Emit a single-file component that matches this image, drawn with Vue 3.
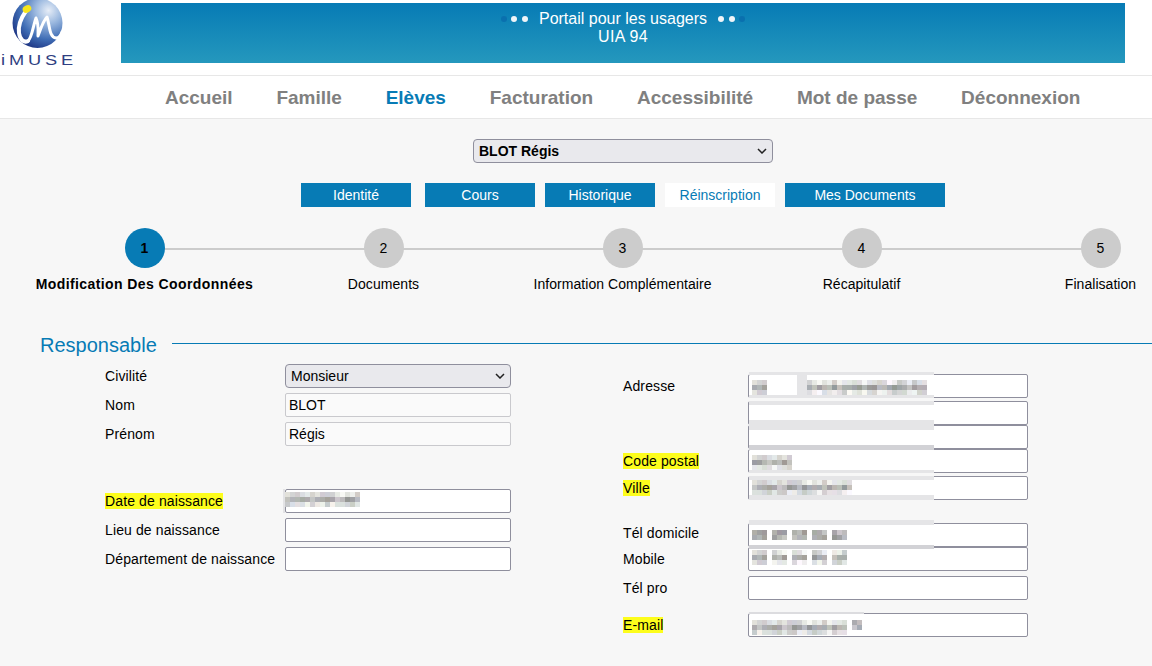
<script setup>
const navItems = ['Accueil', 'Famille', 'Elèves', 'Facturation', 'Accessibilité', 'Mot de passe', 'Déconnexion']
const tabs = [
  { label: 'Identité', cls: 'wide first' },
  { label: 'Cours', cls: 'wide' },
  { label: 'Historique', cls: 'wide' },
  { label: 'Réinscription', cls: 'wide on' },
  { label: 'Mes Documents', cls: 'long' }
]
const steps = ['Modification Des Coordonnées', 'Documents', 'Information Complémentaire', 'Récapitulatif', 'Finalisation']

function cells(blocks) {
  const out = []
  let seed = 7
  const rnd = () => {
    seed = (seed * 9301 + 49297) % 233280
    return seed / 233280
  }
  for (const b of blocks) {
    for (let row = 0; row < b.h; row += 5) {
      for (let col = 0; col < b.w; col += 5) {
        const dark = b.h <= 10 || row === 5
        const v = Math.round(dark ? 150 + rnd() * 50 : 200 + rnd() * 50)
        const r = Math.round(v + (rnd() - 0.5) * 14)
        const bl = Math.round(v + (rnd() - 0.5) * 18)
        out.push({ left: b.x + col + 'px', top: b.y + row + 'px', background: `rgb(${r},${v},${bl})` })
      }
    }
  }
  return out
}

const strips = (list) => list.map(s => ({
  left: s[0] + 'px', top: s[1] + 'px', width: s[2] + 'px', height: s[3] + 'px', background: s[4] || '#e5e5e7'
}))

const left = [
  { label: 'Civilité', select: 'Monsieur', mt: 0 },
  { label: 'Nom', value: 'BLOT', soft: true, mt: 5 },
  { label: 'Prénom', value: 'Régis', soft: true, mt: 5 },
  { label: 'Date de naissance', mark: true, mt: 43, blur: cells([{ x: 0, y: 3, w: 75, h: 15 }]), strips: strips([[-2, 0, 2, 24, '#e3e3e5']]) },
  { label: 'Lieu de naissance', mt: 5 },
  { label: 'Département de naissance', mt: 5 }
]
const right = [
  { label: 'Adresse', mt: 0, blur: cells([{ x: 4, y: 6, w: 15, h: 15 }, { x: 59, y: 6, w: 120, h: 15 }]),
    strips: strips([[1, -2, 185, 3], [49, -2, 10, 26], [1, 21, 185, 3]]) },
  { label: '', mt: 3, strips: strips([[1, 0, 185, 4], [1, 19, 185, 5]]) },
  { label: '', mt: 0, strips: strips([[1, 0, 185, 5], [1, 20, 185, 4, '#d2d2d6']]) },
  { label: 'Code postal', mark: true, mt: 0, blur: cells([{ x: 4, y: 6, w: 40, h: 15 }]), strips: strips([[1, 0, 185, 1, '#d2d2d6'], [1, 21, 185, 3]]) },
  { label: 'Ville', mark: true, mt: 3, blur: cells([{ x: 4, y: 4, w: 100, h: 15 }]), strips: strips([[1, 0, 185, 4], [1, 19, 185, 5]]) },
  { label: 'Tél domicile', mt: 23, dy: -2, blur: cells([{ x: 4, y: 7, w: 15, h: 10 }, { x: 24, y: 7, w: 15, h: 10 }, { x: 44, y: 7, w: 15, h: 10 }, { x: 64, y: 7, w: 15, h: 10 }, { x: 84, y: 7, w: 15, h: 10 }]), strips: strips([[1, -3, 185, 5]]) },
  { label: 'Mobile', mt: 0, blur: cells([{ x: 4, y: 3, w: 15, h: 15 }, { x: 24, y: 3, w: 15, h: 15 }, { x: 44, y: 3, w: 15, h: 15 }, { x: 64, y: 3, w: 15, h: 15 }, { x: 84, y: 3, w: 15, h: 15 }]), strips: strips([[1, -2, 185, 4, '#d2d2d6']]) },
  { label: 'Tél pro', mt: 5 },
  { label: 'E-mail', mark: true, mt: 13, blur: cells([{ x: 4, y: 7, w: 95, h: 15 }, { x: 104, y: 7, w: 10, h: 10 }]), strips: strips([[1, -1, 115, 2, '#dcdcdf']]) }
]
</script>

<template>
  <div class="page">
    <header class="top">
      <div class="logo">
        <svg class="mark" width="52" height="52" viewBox="0 0 52 52" aria-hidden="true">
          <defs>
            <radialGradient id="sph" cx="0.72" cy="0.25" r="0.85">
              <stop offset="0" stop-color="#e6edf7" />
              <stop offset="0.3" stop-color="#9dbae0" />
              <stop offset="0.68" stop-color="#3f6db5" />
              <stop offset="1" stop-color="#1a2f7e" />
            </radialGradient>
          </defs>
          <circle cx="25.5" cy="25" r="25" fill="url(#sph)" />
          <path d="M14 13C9 20 6 28 7 35C8 42 12 45 16 43" fill="none" stroke="#fff" stroke-width="4" stroke-linecap="round" />
          <path d="M16 43C20 40 21 28 24 20C27 27 26 33 26 38C29 30 31 23 35 19C38 28 37 39 44 40C47 40 49 37 50 34" fill="none" stroke="#fff" stroke-width="3" stroke-linecap="round" stroke-linejoin="round" />
          <ellipse cx="15" cy="11" rx="4.5" ry="3.5" fill="#f6e61c" transform="rotate(-25 15 11)" />
        </svg>
        <span class="brand">iMUSE</span>
      </div>
      <div class="banner">
        <div class="banner-line">
          <span class="dots"><i class="dk"></i><i></i><i></i></span>
          <span>Portail pour les usagers</span>
          <span class="dots"><i></i><i></i><i class="dk"></i></span>
        </div>
        <div class="code">UIA 94</div>
      </div>
    </header>

    <nav class="nav">
      <a v-for="n in navItems" :key="n" :class="{ active: n === 'Elèves' }">{{ n }}</a>
    </nav>

    <main class="main">
      <div class="pupil">
        <div class="sel big">
          <span>BLOT Régis</span>
          <svg width="10" height="6" viewBox="0 0 10 6"><path d="M1 1l4 4 4-4" fill="none" stroke="#222" stroke-width="1.5" /></svg>
        </div>
      </div>

      <div class="tabs">
        <button v-for="t in tabs" :key="t.label" type="button" class="tab" :class="t.cls">{{ t.label }}</button>
      </div>

      <ol class="steps">
        <li v-for="(s, i) in steps" :key="s" class="step" :class="{ current: i === 0 }">
          <span class="bullet">{{ i + 1 }}</span>
          <span class="cap">{{ s }}</span>
        </li>
      </ol>

      <div class="section">
        <h2>Responsable</h2>
        <span class="rule"></span>
      </div>

      <div class="form">
        <div class="col left">
          <div v-for="r in left" :key="r.label" class="row" :style="{ marginTop: r.mt + 'px' }">
            <label class="lab"><span :class="{ hl: r.mark }">{{ r.label }}</span></label>
            <div class="field">
              <div v-if="r.select" class="sel">
                <span>{{ r.select }}</span>
                <svg width="10" height="6" viewBox="0 0 10 6"><path d="M1 1l4 4 4-4" fill="none" stroke="#222" stroke-width="1.5" /></svg>
              </div>
              <input v-else class="inp" :class="{ soft: r.soft }" :value="r.value || ''" readonly />
              <span v-for="(c, k) in r.blur" :key="k" class="cell" :style="c"></span>
              <span v-for="(c, k) in r.strips" :key="'s' + k" class="strip" :style="c"></span>
            </div>
          </div>
        </div>
        <div class="col right">
          <div v-for="(r, ri) in right" :key="ri" class="row" :style="{ marginTop: r.mt + 'px' }">
            <label class="lab" :style="{ top: (r.dy || 0) + 'px' }"><span :class="{ hl: r.mark }">{{ r.label }}</span></label>
            <div class="field">
              <input class="inp" value="" readonly />
              <span v-for="(c, k) in r.blur" :key="k" class="cell" :style="c"></span>
              <span v-for="(c, k) in r.strips" :key="'s' + k" class="strip" :style="c"></span>
            </div>
          </div>
        </div>
      </div>
    </main>
  </div>
</template>

<style>
html, body { margin: 0; background: #f7f7f7; overflow: hidden; }
</style>

<style scoped>
.page {
  height: 666px;
  overflow: hidden;
  background: #f7f7f7;
  font-family: "Liberation Sans", Arial, sans-serif;
  font-size: 14px;
  color: #000;
}
.top {
  height: 75px;
  box-sizing: border-box;
  background: #fff;
  display: flex;
  padding-top: 3px;
}
.logo {
  width: 121px;
  flex: none;
  position: relative;
}
.mark { position: absolute; left: 12px; top: -5px; }
.brand {
  position: absolute;
  left: 1px;
  top: 48px;
  font-size: 14px;
  line-height: 18px;
  letter-spacing: 3px;
  color: #2f3f82;
  transform: scaleX(1.3);
  transform-origin: left center;
}
.banner {
  width: 1004px;
  height: 60px;
  box-sizing: border-box;
  padding-top: 7px;
  background: linear-gradient(#077bb5, #2598bd);
  color: #fff;
  font-size: 16px;
  line-height: 18px;
  text-align: center;
}
.banner-line { display: flex; justify-content: center; align-items: center; gap: 11px; }
.code { letter-spacing: 0.3px; }
.dots { display: flex; gap: 4.5px; align-items: center; }
.dots i { width: 6px; height: 6px; border-radius: 50%; background: #f0f5f9; }
.dots i.dk { background: #0a70ae; }
.nav {
  height: 44px;
  box-sizing: border-box;
  background: #fff;
  border-top: 1px solid #e7e7e7;
  border-bottom: 1px solid #e7e7e7;
  display: flex;
  align-items: center;
  gap: 43.8px;
  padding: 1px 0 0 165px;
  font-size: 19px;
  font-weight: 700;
  color: #808080;
}
.nav .active { color: #077bb5; }
.main { display: flex; flex-direction: column; }
.pupil { display: flex; justify-content: center; padding: 20px 0 0 94px; }
.sel {
  width: 226px;
  height: 24px;
  box-sizing: border-box;
  border: 1px solid #8f8f9d;
  border-radius: 4px;
  background: #e9e9ed;
  display: flex;
  align-items: center;
  justify-content: space-between;
  padding: 0 5px;
}
.sel.big { width: 300px; font-weight: 700; }
.tabs { display: flex; padding: 20px 0 0 301px; gap: 10px; }
.tab {
  width: 110px;
  height: 24px;
  padding: 0;
  border: 0;
  background: #077bb5;
  color: #fff;
  font: inherit;
}
.tab.first { margin-right: 4px; }
.tab.on { background: #fff; color: #077bb5; }
.tab.long { width: 160px; }
.steps {
  list-style: none;
  margin: 21px 0 0;
  padding: 0;
  display: flex;
  margin-left: 25px;
}
.step {
  width: 239px;
  flex: none;
  position: relative;
  display: flex;
  flex-direction: column;
  align-items: center;
}
.step:not(:last-child)::after {
  content: "";
  position: absolute;
  left: 50%;
  width: 100%;
  top: 20px;
  height: 2px;
  background: #ccc;
}
.bullet {
  position: relative;
  z-index: 1;
  width: 40px;
  height: 40px;
  border-radius: 50%;
  background: #ccc;
  display: flex;
  align-items: center;
  justify-content: center;
  font-size: 14px;
}
.step.current .bullet { background: #077bb5; font-weight: 700; }
.cap { margin-top: 8px; line-height: 16px; white-space: nowrap; letter-spacing: 0.05px; }
.step.current .cap { font-weight: 700; letter-spacing: 0.41px; }
.section {
  display: flex;
  align-items: flex-start;
  margin-top: 41px;
  padding-left: 40px;
  height: 24px;
}
.section h2 {
  margin: 0;
  font-size: 20px;
  font-weight: 400;
  line-height: 24px;
  color: #077bb5;
}
.rule { flex: 1; height: 1px; background: #077bb5; margin: 10px 0 0 15px; }
.form { display: flex; align-items: flex-start; }
.col { display: flex; flex-direction: column; }
.col.left { width: 623px; padding: 7px 0 0 105px; box-sizing: border-box; }
.col.right { padding-top: 17px; }
.row { display: flex; align-items: center; height: 24px; }
.lab { position: relative; display: block; line-height: 16px; white-space: nowrap; letter-spacing: 0.12px; }
.left .lab { width: 180px; }
.right .lab { width: 125px; }
.hl { background: #fdfd1c; }
.field { position: relative; width: 226px; height: 24px; }
.right .field { width: 280px; }
.inp {
  display: block;
  width: 100%;
  height: 24px;
  box-sizing: border-box;
  border: 1px solid #8f8f9d;
  border-radius: 2px;
  background: #fff;
  padding: 0 3px;
  font: inherit;
  color: #000;
  outline: none;
}
.inp.soft { border-color: #c9c9cd; background: #fafafa; }
.cell { position: absolute; width: 5px; height: 5px; }
.strip { position: absolute; }
</style>
